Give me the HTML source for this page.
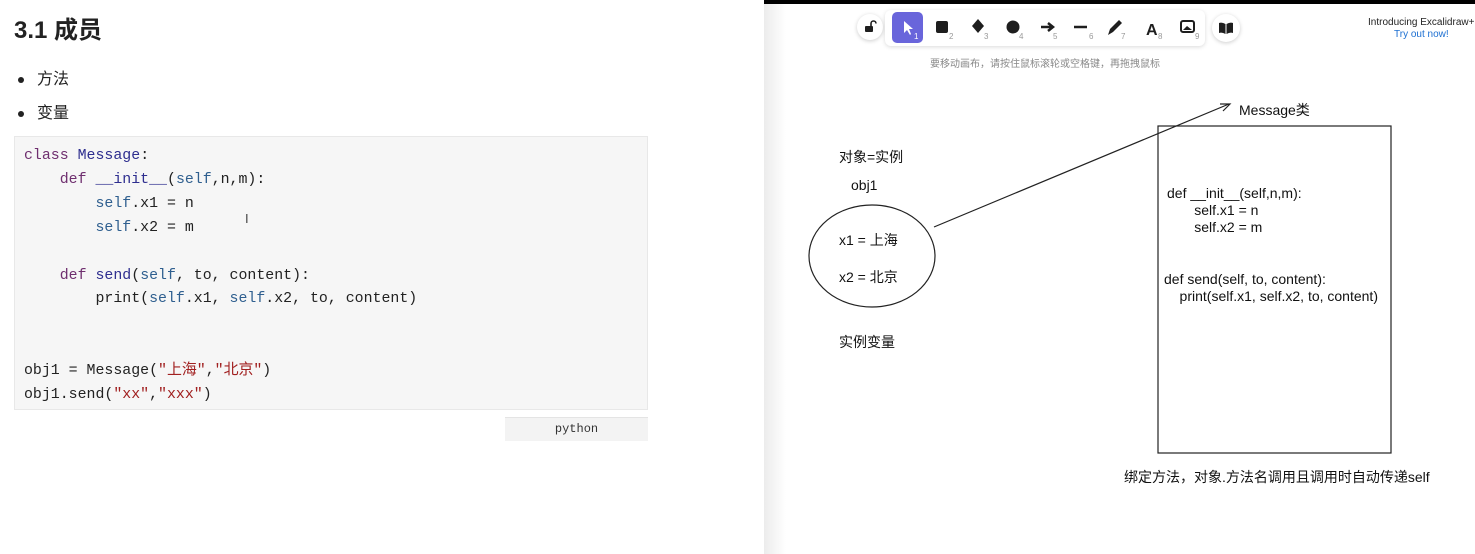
<!DOCTYPE html>
<html><head><meta charset="utf-8"><style>
body{margin:0;width:1475px;height:554px;overflow:hidden;background:#fff;font-family:"Liberation Sans","Noto Sans CJK SC",sans-serif;position:relative}
.abs{position:absolute}
h1{position:absolute;left:14px;top:10px;margin:0;font-size:24px;font-weight:bold;color:#222}
.li{position:absolute;left:18px;font-size:16px;color:#222}
.li:before{content:"";display:inline-block;width:6px;height:6px;border-radius:50%;background:#222;margin-right:13px;vertical-align:middle}
.code{position:absolute;left:14px;top:136px;width:634px;height:274px;background:#f6f6f6;border:1px solid #e8e8e8;box-sizing:border-box}
.code pre{margin:0;position:absolute;left:9px;top:8px;font-family:"Liberation Mono","Noto Sans CJK SC",monospace;font-size:14.9px;line-height:23.9px;color:#222}
.k{color:#6f2f6f}.c{color:#2e2e8f}.s{color:#2f5f8f}.str{color:#a12020}
.t{font-family:"Liberation Sans","Noto Sans CJK SC",sans-serif;font-size:14px;color:#111}
</style></head><body>
<h1>3.1 成员</h1>
<div class="li" style="top:65px">方法</div>
<div class="li" style="top:99px">变量</div>
<div class="code"><pre><span class="k">class</span> <span class="c">Message</span>:
    <span class="k">def</span> <span class="c">__init__</span>(<span class="s">self</span>,n,m):
        <span class="s">self</span>.x1 = n
        <span class="s">self</span>.x2 = m

    <span class="k">def</span> <span class="c">send</span>(<span class="s">self</span>, to, content):
        print(<span class="s">self</span>.x1, <span class="s">self</span>.x2, to, content)


obj1 = Message(<span class="str">"上海"</span>,<span class="str">"北京"</span>)
obj1.send(<span class="str">"xx"</span>,<span class="str">"xxx"</span>)</pre>
<div class="abs" style="left:230px;top:74px;font-size:13px;color:#444">I</div></div>
<div class="abs" style="left:505px;top:417px;width:143px;height:23px;background:#f3f3f3;border-top:1px solid #e4e4e4;font-family:'Liberation Mono',monospace;font-size:12px;text-align:center;line-height:22px;color:#333">python</div>

<div class="abs" style="left:764px;top:0;width:711px;height:554px;background:linear-gradient(to right,#ececec,#fff 22px)"></div>
<div class="abs" style="left:764px;top:0;width:711px;height:4px;background:#000"></div>
<!-- toolbar -->
<div class="abs" style="left:857px;top:14px;width:26px;height:26px;border-radius:50%;background:#fff;box-shadow:0 1px 4px rgba(0,0,0,.2)"><svg width="26" height="26"><rect x="8" y="12" width="8" height="6" rx="1" fill="#1e1e1e"/><path d="M14 12 V9.5 A2.5 2.5 0 0 1 19 9.5" stroke="#1e1e1e" stroke-width="1.6" fill="none"/></svg></div>
<div class="abs" style="left:885px;top:10px;width:320px;height:36px;border-radius:6px;background:#fff;box-shadow:0 1px 4px rgba(0,0,0,.15)"></div>
<div class="abs" style="left:892px;top:12px;width:31px;height:31px;border-radius:5px;background:#6965db"></div>
<svg class="abs" style="left:885px;top:10px" width="212" height="36">
<path d="M19 11 L19 23 L22 20 L25 25 L26 24 L24 19 L28 19 Z" fill="#fff"/>
<text x="29" y="29" font-size="8" fill="#fff" font-family="Liberation Sans">1</text>
<rect x="51" y="11" width="12" height="12" rx="2" fill="#1e1e1e"/><text x="64" y="29" font-size="8" fill="#999">2</text>
<path d="M93 9 L99 16 L93 23 L87 16 Z" fill="#1e1e1e"/><text x="99" y="29" font-size="8" fill="#999">3</text>
<circle cx="128" cy="17" r="6.5" fill="#1e1e1e"/><text x="134" y="29" font-size="8" fill="#999">4</text>
<path d="M156 17 H167 M163 13 L168 17 L163 21" stroke="#1e1e1e" stroke-width="2.5" fill="none"/><text x="168" y="29" font-size="8" fill="#999">5</text>
<path d="M189 17 H202" stroke="#1e1e1e" stroke-width="2.5"/><text x="204" y="29" font-size="8" fill="#999">6</text>
</svg>
<svg class="abs" style="left:1105px;top:10px" width="110" height="36">
<path d="M3 25 L5 19 L14 10 L17 13 L8 22 Z" fill="#1e1e1e"/><text x="16" y="29" font-size="8" fill="#999">7</text>
<text x="41" y="25" font-size="16" font-weight="bold" fill="#1e1e1e" font-family="Liberation Sans">A</text><text x="53" y="29" font-size="8" fill="#999">8</text>
<rect x="76" y="11" width="13" height="11" rx="2" fill="none" stroke="#1e1e1e" stroke-width="2"/><path d="M78 20 L82 16 L87 20Z" fill="#1e1e1e"/><text x="90" y="29" font-size="8" fill="#999">9</text>
</svg>
<div class="abs" style="left:1212px;top:14px;width:28px;height:28px;border-radius:50%;background:#fff;box-shadow:0 1px 4px rgba(0,0,0,.2)"><svg width="28" height="28"><path d="M7 9 Q10 8 13.5 10 V20 Q10 18 7 19 Z M21 9 Q18 8 14.5 10 V20 Q18 18 21 19 Z" fill="#1e1e1e"/></svg></div>
<div class="abs" style="left:930px;top:55px;font-size:10px;color:#888">要移动画布，请按住鼠标滚轮或空格键，再拖拽鼠标</div>
<div class="abs" style="left:1368px;top:17px;font-size:10px;color:#222">Introducing Excalidraw+</div>
<div class="abs" style="left:1394px;top:29px;font-size:10px;color:#1c6fd1">Try out now!</div>
<!-- drawing -->
<svg class="abs" style="left:764px;top:0" width="711" height="554">
<ellipse cx="108" cy="256" rx="63" ry="51" fill="none" stroke="#222" stroke-width="1.2"/>
<path d="M170 227 L465 104 M456 104 L466 104 L459 111" stroke="#222" stroke-width="1.2" fill="none"/>
<rect x="394" y="126" width="233" height="327" fill="none" stroke="#222" stroke-width="1.2"/>
</svg>
<div class="abs t" style="left:839px;top:147px">对象=实例</div>
<div class="abs t" style="left:851px;top:177px">obj1</div>
<div class="abs t" style="left:839px;top:230px">x1 = 上海</div>
<div class="abs t" style="left:839px;top:267px">x2 = 北京</div>
<div class="abs t" style="left:839px;top:332px">实例变量</div>
<div class="abs t" style="left:1239px;top:100px">Message类</div>
<div class="abs t" style="left:1167px;top:185px;line-height:17px">def __init__(self,n,m):<br>&nbsp;&nbsp;&nbsp;&nbsp;&nbsp;&nbsp;&nbsp;self.x1 = n<br>&nbsp;&nbsp;&nbsp;&nbsp;&nbsp;&nbsp;&nbsp;self.x2 = m</div>
<div class="abs t" style="left:1164px;top:271px;line-height:17px">def send(self, to, content):<br>&nbsp;&nbsp;&nbsp;&nbsp;print(self.x1, self.x2, to, content)</div>
<div class="abs t" style="left:1124px;top:467px">绑定方法，对象.方法名调用且调用时自动传递self</div>
</body></html>
